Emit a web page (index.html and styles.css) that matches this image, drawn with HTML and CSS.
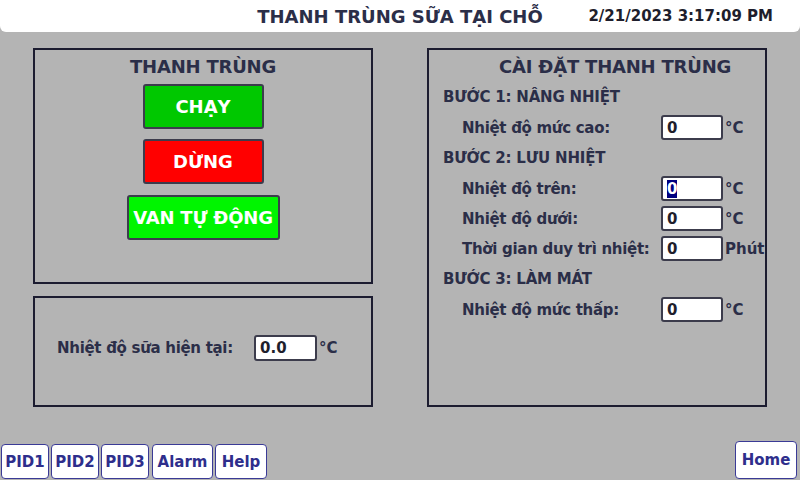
FILE: index.html
```html
<!DOCTYPE html>
<html>
<head>
    <title>Thanh trùng sữa tại chỗ</title>
    <link rel="stylesheet" href="styles.css">
</head>
<body>
    <div id="header">
        <div class="spacer"></div>
        <h1>THANH TRÙNG SỮA TẠI CHỖ</h1>
        <div id="clock">2/21/2023 3:17:09 PM</div>
    </div>
    <div id="main">
        <div id="left-col">
            <div class="panel" id="control">
                <h2>THANH TRÙNG</h2>
                <div class="btn run">CHẠY</div>
                <div class="btn stop">DỪNG</div>
                <div class="btn valve">VAN TỰ ĐỘNG</div>
            </div>
            <div class="panel" id="current">
                <span class="label">Nhiệt độ sữa hiện tại:</span>
                <span class="field">0.0</span>
                <span class="unit">°C</span>
            </div>
        </div>
        <div class="panel" id="settings">
            <h2>CÀI ĐẶT THANH TRÙNG</h2>
            <div class="step">BƯỚC 1: NÂNG NHIỆT</div>
            <div class="row">
                <span class="label">Nhiệt độ mức cao:</span>
                <span class="field">0</span>
                <span class="unit">°C</span>
            </div>
            <div class="step">BƯỚC 2: LƯU NHIỆT</div>
            <div class="row">
                <span class="label">Nhiệt độ trên:</span>
                <span class="field"><span class="sel">0</span></span>
                <span class="unit">°C</span>
            </div>
            <div class="row">
                <span class="label">Nhiệt độ dưới:</span>
                <span class="field">0</span>
                <span class="unit">°C</span>
            </div>
            <div class="row">
                <span class="label">Thời gian duy trì nhiệt:</span>
                <span class="field">0</span>
                <span class="unit">Phút</span>
            </div>
            <div class="step">BƯỚC 3: LÀM MÁT</div>
            <div class="row">
                <span class="label">Nhiệt độ mức thấp:</span>
                <span class="field">0</span>
                <span class="unit">°C</span>
            </div>
        </div>
    </div>
    <div id="bottom-bar">
        <div class="nav-group">
            <div class="nav pid">PID1</div>
            <div class="nav pid">PID2</div>
            <div class="nav pid">PID3</div>
            <div class="nav alarm">Alarm</div>
            <div class="nav help">Help</div>
        </div>
        <div class="nav home">Home</div>
    </div>
</body>
</html>
```

FILE: styles.css
```css
body {
    font-family: "DejaVu Sans", Verdana, sans-serif;
    font-weight: bold;
    margin: 0;
    padding: 0;
    width: 800px;
    height: 480px;
    display: flex;
    flex-direction: column;
    background-color: #b4b4b4;
    color: #2b2e48;
    overflow: hidden;
}
#header {
    height: 32px;
    background-color: #fff;
    border-radius: 0 0 6px 6px;
    display: grid;
    grid-template-columns: 1fr auto 1fr;
    align-items: center;
}
#header h1 {
    margin: 0;
    font-size: 18px;
    color: #2b2e48;
}
#clock {
    justify-self: end;
    padding-right: 27px;
    font-size: 15px;
    color: #1e1e2c;
}
#main {
    display: flex;
    gap: 54px;
    padding: 16px 33px 0;
}
.panel {
    box-sizing: border-box;
    border: 2px solid #1c1c30;
    width: 340px;
}
#left-col {
    display: flex;
    flex-direction: column;
    gap: 12px;
}
#control {
    height: 236px;
    display: flex;
    flex-direction: column;
    align-items: center;
    padding-top: 5px;
}
h2 {
    margin: 0;
    height: 24px;
    line-height: 24px;
    font-size: 18px;
    letter-spacing: -0.2px;
}
#control h2 {
    margin-bottom: 5px;
}
.btn {
    box-sizing: border-box;
    height: 45px;
    width: 121px;
    border: 2px solid #3c3c4c;
    border-radius: 3px;
    color: #fff;
    font-size: 18px;
    display: flex;
    align-items: center;
    justify-content: center;
    margin-bottom: 10px;
}
.run {
    background-color: #00c800;
}
.stop {
    background-color: #ff0000;
}
.valve {
    width: 153px;
    margin-top: 1px;
    background-color: #00f500;
    letter-spacing: -0.2px;
}
#current {
    height: 111px;
    display: flex;
    align-items: center;
    padding-left: 22px;
    padding-bottom: 8px;
}
#current .label {
    width: 197px;
}
.field {
    box-sizing: border-box;
    width: 63px;
    height: 26px;
    background-color: #fff;
    border: 2px solid #3c3c4c;
    border-radius: 3px;
    padding-left: 4px;
    display: flex;
    align-items: center;
    font-size: 15px;
    color: #1e1e2c;
}
.sel {
    background-color: #000080;
    color: #fff;
}
.unit {
    padding-left: 2px;
    font-size: 15px;
}
.label {
    font-size: 15px;
    letter-spacing: -0.3px;
}
#settings {
    height: 359px;
    display: flex;
    flex-direction: column;
    gap: 5px;
    padding: 5px 0 0 14px;
}
#settings h2 {
    margin-left: 56px;
}
.step {
    height: 26px;
    line-height: 26px;
    font-size: 15px;
    letter-spacing: -0.2px;
}
.row {
    display: flex;
    align-items: center;
    height: 25px;
    padding-left: 19px;
}
.row .label {
    width: 199px;
}
.row .field {
    height: 25px;
    width: 62px;
}
#bottom-bar {
    margin-top: auto;
    display: flex;
    justify-content: space-between;
    align-items: flex-end;
    padding: 0 3px 1px 1px;
}
.nav-group {
    display: flex;
    gap: 2px;
}
.nav {
    box-sizing: border-box;
    height: 35px;
    background-color: #fff;
    border: 1px solid #3a3a96;
    border-radius: 4px;
    color: #2e2e8c;
    font-size: 15px;
    display: flex;
    align-items: center;
    justify-content: center;
}
.pid {
    width: 48px;
}
.alarm {
    width: 61px;
    margin-left: 1px;
}
.help {
    width: 52px;
}
.home {
    width: 62px;
    height: 38px;
}
```
